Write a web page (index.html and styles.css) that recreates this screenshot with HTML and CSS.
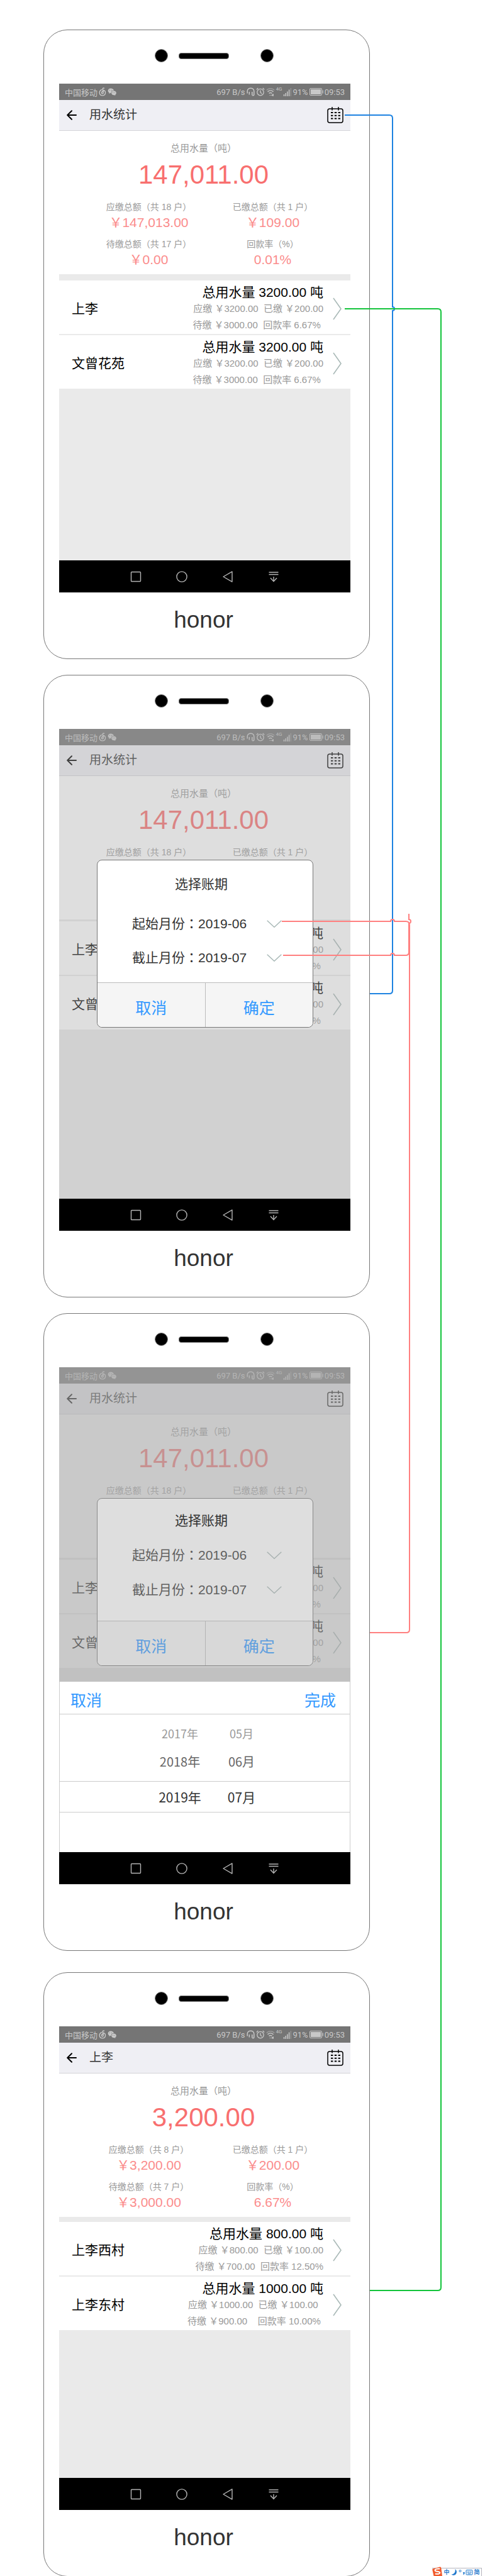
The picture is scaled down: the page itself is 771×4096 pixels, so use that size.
FILE: index.html
```html
<!DOCTYPE html>
<html lang="zh-CN">
<head>
<meta charset="utf-8">
<meta name="viewport" content="width=device-width, initial-scale=1">
<title>用水统计</title>
<link rel="stylesheet" href="styles.css">
</head>
<body>
<svg class="sprite" aria-hidden="true">
  <symbol id="music" viewBox="0 0 12 14"><path d="M8.5 1.2C7 .6 6 1.600 6.200 3L7.200 8.200C7.400 10.500 4.400 10.400 4.500 8.200C4.600 6.800 6 6.200 7.500 6.300M4.300 3.600C-.6 6 .6 12.800 5.800 12.900C11.800 12.800 12.200 5 6.500 4.300" fill="none" stroke="currentColor" stroke-width="1.400" stroke-linecap="round"/></symbol>
  <symbol id="wechat" viewBox="0 0 14 14"><path d="M5 1.500c2.600 0 4.700 1.500 4.900 3.500C7 5 5.200 7 5.600 9.200L4 9.100 2.300 10.200 2.600 8.500C-.9 6.500.6 1.500 5 1.500z" fill="currentColor"/><path d="M9.800 5.600c4.200 0 5.400 4.400 2.300 6.100l.3 1.300-1.500-.8C5 12.800 4.800 5.800 9.800 5.600z" fill="currentColor"/><g fill="#777"><circle cx="3.600" cy="4.300" r=".6"/><circle cx="6.600" cy="4.300" r=".6"/><circle cx="8.600" cy="8.200" r=".5"/><circle cx="11" cy="8.200" r=".5"/></g></symbol>
  <symbol id="headset" viewBox="0 0 13 14"><path d="M1.200 9.500V6C1.500-.4 11.500-.4 11.800 6v5.500c0 1-1.500 1.300-2.500 1.300M4.300 7v4.500M8.800 7v5.500" fill="none" stroke="currentColor" stroke-width="1.500"/></symbol>
  <symbol id="alarm" viewBox="0 0 14 14"><circle cx="7" cy="7.600" r="5.200" fill="none" stroke="currentColor" stroke-width="1.300"/><path d="M7 4.500v3.300l2 2.200M.8 3.500 3.300 1M13.200 3.500 10.700 1" fill="none" stroke="currentColor" stroke-width="1.300"/></symbol>
  <symbol id="wifi" viewBox="0 0 14 14"><path d="M.8 4.500C4 .8 10 .8 13.200 4.500" fill="none" stroke="currentColor" stroke-width="1.400" opacity=".45"/><path d="M2.500 7c2.500-2.800 6.500-2.800 9 0M4.600 9.600c1.400-1.500 3.400-1.500 4.800 0" fill="none" stroke="currentColor" stroke-width="1.400"/><path d="M5.500 12.500h2M8.500 12.500l3-2v3z" fill="currentColor" stroke="currentColor" stroke-width=".8"/></symbol>
  <symbol id="signal" viewBox="0 0 13 14"><path d="M1.500 11v3M4.200 9v5M6.900 6.500V14M9.600 3.500V14" stroke="currentColor" stroke-width="1.500"/><path d="M12.300 1v13" stroke="currentColor" opacity=".5"/></symbol>
  <symbol id="battery" viewBox="0 0 22 12"><rect x=".5" y=".5" width="19" height="11" rx="1.500" fill="none" stroke="currentColor"/><rect x="2" y="2" width="16" height="8" fill="currentColor"/><path d="M21.200 3.500v5" stroke="currentColor" stroke-width="1.200"/></symbol>
  <symbol id="back" viewBox="0 0 16 16"><path d="M15 8H1.500M8 1.200 1.200 8 8 14.800" fill="none" stroke="currentColor" stroke-width="2" stroke-linecap="round" stroke-linejoin="round"/></symbol>
  <symbol id="calendar" viewBox="0 0 26 26"><rect x="1" y="3" width="24" height="22" rx="3" fill="none" stroke="currentColor" stroke-width="1.500"/><path d="M8 .5v4.500M18 .5v4.500" stroke="currentColor" stroke-width="1.500" stroke-linecap="round"/><path d="M6 9h15M6 13.800h15M6 18.600h15" stroke="currentColor" stroke-width="2" stroke-dasharray="3.400 2.400"/></symbol>
  <symbol id="next" viewBox="0 0 14 36"><path d="M1 1 13 18 1 35" fill="none" stroke="#a9b9b7" stroke-width="1.600"/></symbol>
  <symbol id="down" viewBox="0 0 24 12"><path d="M.7.7 12 11.200 23.300.7" fill="none" stroke="#a9b9b7" stroke-width="1.500"/></symbol>
  <symbol id="nav-square" viewBox="0 0 18 18"><rect x="1.500" y="1.500" width="15" height="15" rx="1" fill="none" stroke="#b4b4b4" stroke-width="1.400"/></symbol>
  <symbol id="nav-circle" viewBox="0 0 18 18"><circle cx="9" cy="9" r="8.100" fill="none" stroke="#b4b4b4" stroke-width="1.400"/></symbol>
  <symbol id="nav-back" viewBox="0 0 18 18"><path d="M16 .9v16.200L2 9z" fill="none" stroke="#b4b4b4" stroke-width="1.400" stroke-linejoin="round"/></symbol>
  <symbol id="nav-down" viewBox="0 0 18 18"><path d="M1.500 2h15M1.500 5.500h15M9 9v7.500M4 11l5 5.500L14 11" fill="none" stroke="#b4b4b4" stroke-width="1.400"/></symbol>
</svg>

<main class="board">

  <section class="phone">
    <div class="sensors"><i class="dot"></i><i class="speaker"></i><i class="dot dot-far"></i></div>
    <div class="app">
      <div class="status"><span>中国移动</span><svg class="i-music"><use href="#music"/></svg><svg class="i-14"><use href="#wechat"/></svg><span class="status-right">697 B/s</span><svg class="i-13"><use href="#headset"/></svg><svg class="i-14"><use href="#alarm"/></svg><svg class="i-14"><use href="#wifi"/></svg><small>4G</small><svg class="i-13"><use href="#signal"/></svg><span>91%</span><svg class="i-battery"><use href="#battery"/></svg><span>09:53</span></div>
      <header class="bar"><button class="icon-btn" aria-label="返回"><svg class="i-back"><use href="#back"/></svg></button><h1>用水统计</h1><button class="icon-btn" aria-label="选择账期"><svg class="i-cal"><use href="#calendar"/></svg></button></header>
      <div class="summary">
        <p class="total-label">总用水量（吨）</p>
        <p class="total">147,011.00</p>
        <dl class="stats">
          <div><dt>应缴总额（共 18 户）</dt><dd>￥147,013.00</dd></div>
          <div><dt>已缴总额（共 1 户）</dt><dd>￥109.00</dd></div>
          <div><dt>待缴总额（共 17 户）</dt><dd>￥0.00</dd></div>
          <div><dt>回款率（%）</dt><dd>0.01%</dd></div>
        </dl>
      </div>
      <div class="list list-gap-10">
        <a class="item" href="#"><span class="name">上李</span><span class="info"><span class="usage">总用水量 3200.00 吨</span><span>应缴 ￥3200.00  已缴 ￥200.00</span><span>待缴 ￥3000.00  回款率 6.67% </span></span><svg class="i-next"><use href="#next"/></svg></a>
        <a class="item" href="#"><span class="name">文曾花苑</span><span class="info"><span class="usage">总用水量 3200.00 吨</span><span>应缴 ￥3200.00  已缴 ￥200.00</span><span>待缴 ￥3000.00  回款率 6.67% </span></span><svg class="i-next"><use href="#next"/></svg></a>
      </div>
      <div class="rest rest-first"></div>
    </div>
    <nav class="keys"><svg><use href="#nav-square"/></svg><svg><use href="#nav-circle"/></svg><svg><use href="#nav-back"/></svg><svg><use href="#nav-down"/></svg></nav>
    <p class="brand">honor</p>
  </section>

  <section class="phone">
    <div class="sensors"><i class="dot"></i><i class="speaker"></i><i class="dot dot-far"></i></div>
    <div class="app">
      <div class="status"><span>中国移动</span><svg class="i-music"><use href="#music"/></svg><svg class="i-14"><use href="#wechat"/></svg><span class="status-right">697 B/s</span><svg class="i-13"><use href="#headset"/></svg><svg class="i-14"><use href="#alarm"/></svg><svg class="i-14"><use href="#wifi"/></svg><small>4G</small><svg class="i-13"><use href="#signal"/></svg><span>91%</span><svg class="i-battery"><use href="#battery"/></svg><span>09:53</span></div>
      <header class="bar"><button class="icon-btn" aria-label="返回"><svg class="i-back"><use href="#back"/></svg></button><h1>用水统计</h1><button class="icon-btn" aria-label="选择账期"><svg class="i-cal"><use href="#calendar"/></svg></button></header>
      <div class="summary">
        <p class="total-label">总用水量（吨）</p>
        <p class="total">147,011.00</p>
        <dl class="stats stats-covered">
          <div><dt>应缴总额（共 18 户）</dt></div>
          <div><dt>已缴总额（共 1 户）</dt></div>
        </dl>
      </div>
      <div class="list list-gap-3">
        <a class="item" href="#"><span class="name">上李</span><span class="info"><span class="usage">吨</span><span>00</span><span>% </span></span><svg class="i-next"><use href="#next"/></svg></a>
        <a class="item" href="#"><span class="name">文曾</span><span class="info"><span class="usage">吨</span><span>00</span><span>% </span></span><svg class="i-next"><use href="#next"/></svg></a>
      </div>
      <div class="rest rest-second"></div>
      <div class="dim"></div>
      <div class="dialog" role="dialog">
        <h2>选择账期</h2>
        <div class="fields">
          <button class="field"><span>起始月份<span class="colon" lang="zh-TW">：</span>2019-06</span><svg class="i-down"><use href="#down"/></svg></button>
          <button class="field"><span>截止月份<span class="colon" lang="zh-TW">：</span>2019-07</span><svg class="i-down"><use href="#down"/></svg></button>
        </div>
        <div class="actions"><button>取消</button><button>确定</button></div>
      </div>
    </div>
    <nav class="keys"><svg><use href="#nav-square"/></svg><svg><use href="#nav-circle"/></svg><svg><use href="#nav-back"/></svg><svg><use href="#nav-down"/></svg></nav>
    <p class="brand">honor</p>
  </section>

  <section class="phone">
    <div class="sensors"><i class="dot"></i><i class="speaker"></i><i class="dot dot-far"></i></div>
    <div class="app">
      <div class="status"><span>中国移动</span><svg class="i-music"><use href="#music"/></svg><svg class="i-14"><use href="#wechat"/></svg><span class="status-right">697 B/s</span><svg class="i-13"><use href="#headset"/></svg><svg class="i-14"><use href="#alarm"/></svg><svg class="i-14"><use href="#wifi"/></svg><small>4G</small><svg class="i-13"><use href="#signal"/></svg><span>91%</span><svg class="i-battery"><use href="#battery"/></svg><span>09:53</span></div>
      <header class="bar"><button class="icon-btn" aria-label="返回"><svg class="i-back"><use href="#back"/></svg></button><h1>用水统计</h1><button class="icon-btn" aria-label="选择账期"><svg class="i-cal"><use href="#calendar"/></svg></button></header>
      <div class="summary">
        <p class="total-label">总用水量（吨）</p>
        <p class="total">147,011.00</p>
        <dl class="stats stats-covered">
          <div><dt>应缴总额（共 18 户）</dt></div>
          <div><dt>已缴总额（共 1 户）</dt></div>
        </dl>
      </div>
      <div class="list list-gap-3">
        <a class="item" href="#"><span class="name">上李</span><span class="info"><span class="usage">吨</span><span>00</span><span>% </span></span><svg class="i-next"><use href="#next"/></svg></a>
        <a class="item" href="#"><span class="name">文曾</span><span class="info"><span class="usage">吨</span><span>00</span><span>% </span></span><svg class="i-next"><use href="#next"/></svg></a>
      </div>
      <div class="rest rest-third"></div>
      <div class="dim"></div>
      <div class="dialog dialog-behind" role="dialog">
        <h2>选择账期</h2>
        <div class="fields">
          <button class="field"><span>起始月份<span class="colon" lang="zh-TW">：</span>2019-06</span><svg class="i-down"><use href="#down"/></svg></button>
          <button class="field"><span>截止月份<span class="colon" lang="zh-TW">：</span>2019-07</span><svg class="i-down"><use href="#down"/></svg></button>
        </div>
        <div class="actions"><button>取消</button><button>确定</button></div>
      </div>
      <div class="dim dim-top"></div>
    </div>
    <div class="sheet">
      <div class="sheet-bar"><button>取消</button><button>完成</button></div>
      <div class="pick pick-far"><span>2017年</span><span>05月</span></div>
      <div class="pick pick-near"><span>2018年</span><span>06月</span></div>
      <div class="pick pick-on"><span>2019年</span><span>07月</span></div>
    </div>
    <nav class="keys"><svg><use href="#nav-square"/></svg><svg><use href="#nav-circle"/></svg><svg><use href="#nav-back"/></svg><svg><use href="#nav-down"/></svg></nav>
    <p class="brand">honor</p>
  </section>

  <section class="phone phone-last">
    <div class="sensors"><i class="dot"></i><i class="speaker"></i><i class="dot dot-far"></i></div>
    <div class="app">
      <div class="status"><span>中国移动</span><svg class="i-music"><use href="#music"/></svg><svg class="i-14"><use href="#wechat"/></svg><span class="status-right">697 B/s</span><svg class="i-13"><use href="#headset"/></svg><svg class="i-14"><use href="#alarm"/></svg><svg class="i-14"><use href="#wifi"/></svg><small>4G</small><svg class="i-13"><use href="#signal"/></svg><span>91%</span><svg class="i-battery"><use href="#battery"/></svg><span>09:53</span></div>
      <header class="bar"><button class="icon-btn" aria-label="返回"><svg class="i-back"><use href="#back"/></svg></button><h1>上李</h1><button class="icon-btn" aria-label="选择账期"><svg class="i-cal"><use href="#calendar"/></svg></button></header>
      <div class="summary">
        <p class="total-label">总用水量（吨）</p>
        <p class="total">3,200.00</p>
        <dl class="stats">
          <div><dt>应缴总额（共 8 户）</dt><dd>￥3,200.00</dd></div>
          <div><dt>已缴总额（共 1 户）</dt><dd>￥200.00</dd></div>
          <div><dt>待缴总额（共 7 户）</dt><dd>￥3,000.00</dd></div>
          <div><dt>回款率（%）</dt><dd>6.67%</dd></div>
        </dl>
      </div>
      <div class="list list-gap-8">
        <a class="item" href="#"><span class="name">上李西村</span><span class="info"><span class="usage">总用水量 800.00 吨</span><span>应缴 ￥800.00  已缴 ￥100.00</span><span>待缴 ￥700.00  回款率 12.50%</span></span><svg class="i-next"><use href="#next"/></svg></a>
        <a class="item" href="#"><span class="name">上李东村</span><span class="info"><span class="usage">总用水量 1000.00 吨</span><span>应缴 ￥1000.00  已缴 ￥100.00  </span><span>待缴 ￥900.00    回款率 10.00% </span></span><svg class="i-next"><use href="#next"/></svg></a>
      </div>
      <div class="rest rest-last"></div>
    </div>
    <nav class="keys"><svg><use href="#nav-square"/></svg><svg><use href="#nav-circle"/></svg><svg><use href="#nav-back"/></svg><svg><use href="#nav-down"/></svg></nav>
    <p class="brand">honor</p>
  </section>

  <svg class="links" viewBox="431 0 340 3700" fill="none" stroke-width="2" aria-hidden="true">
    <path stroke="#1e83e1" d="M548 183H619Q624 183 624 188V488A3 3 0 0 1 624 494V1575Q624 1580 619 1580H588"/>
    <path stroke="#13c43b" d="M548 491H696Q701 491 701 496V3637Q701 3642 696 3642H588"/>
    <g stroke="#ff8080"><path d="M448 1465H621A3 3 0 0 1 627 1465H645Q651 1465 651 1471V2591Q651 2596 646 2596H588"/><path d="M450 1519H621A3 3 0 0 1 627 1519H645Q650 1519 650 1514V1468"/><path d="M650 1453V1462A3 3 0 0 1 650 1468"/></g>
  </svg>

  <div class="ime">
    <svg class="ime-logo" viewBox="0 0 16 15"><path d="M1 3.500 12.500.5Q14 .3 14.300 2L16 15H2.500L.3 5Q.1 3.800 1 3.500z" fill="#f15a2b"/><path d="M12.200 3.600C8 3 4.200 4 4.600 6.200C5 8.400 11.800 7.200 12.300 9.500C12.600 11.800 8.500 12.300 4.800 11.500" fill="none" stroke="#fff" stroke-width="2"/></svg>
    <span>中</span>
    <svg viewBox="0 0 12 12"><path d="M7.500 1C12 4 10 11.500 4 10.800L1.500 9.500C6 9.500 8.500 5.500 7.500 1z" fill="#1f78cc"/></svg>
    <svg viewBox="0 0 12 12"><circle cx="3.500" cy="4" r="1.500" fill="none" stroke="#1f78cc"/><path d="M8.200 6h2.600c.2 2-.6 3.400-2.200 4.200l-.4-.8c.6-.4.8-.8.800-1.400h-.8z" fill="#1f78cc"/></svg>
    <svg viewBox="0 0 12 12"><rect x="1" y="2.500" width="10" height="7.500" rx="1" fill="none" stroke="#1f78cc"/><path d="M2.500 4.800h7M2.500 6.500h7" stroke="#1f78cc" stroke-dasharray="1 .5"/><path d="M3.500 8.300h5" stroke="#1f78cc"/></svg>
    <span>简</span>
  </div>
</main>
</body>
</html>
```
FILE: styles.css
```css
* { box-sizing: border-box; }
body, h1, h2, p, dl, dd { margin: 0; font-weight: 400; }
body {
  background: #fff;
  color: #333;
  font-family: "Liberation Sans", "Noto Sans CJK SC", sans-serif;
}
button { margin: 0; padding: 0; border: 0; background: none; font: inherit; color: inherit; cursor: pointer; }
svg { display: block; flex: none; }
.sprite { position: absolute; width: 0; height: 0; }

.board {
  position: relative;
  display: flex;
  flex-direction: column;
  gap: 25px;
  padding: 47px 183px 0 69px;
  overflow: hidden;
}
.links { position: absolute; top: 0; right: 0; width: 340px; height: 3700px; pointer-events: none; }

/* Handset */
.phone { padding: 30px 30px 0 24px; border: 1px solid #777; border-radius: 38px; }
.phone-last { margin: 9px 0 -1px; }
.sensors { display: flex; align-items: center; justify-content: center; padding: 0 122px 34px 152px; }
.dot { flex: none; width: 21px; height: 21px; border: 1px solid #777; border-radius: 50%; background: #000; }
.dot-far { margin-left: 50px; }
.speaker { flex: none; width: 80px; height: 10px; margin-left: 17px; border: 1px solid #777; border-radius: 4px; background: #000; }
.keys { display: flex; align-items: center; justify-content: center; gap: 55px; height: 51px; background: #000; }
.keys svg { width: 18px; height: 18px; }
.brand { height: 105px; padding: 22px 4px 0 0; font-size: 37px; line-height: 44px; text-align: center; }

/* App chrome */
.app { position: relative; }
.status {
  display: flex;
  align-items: center;
  gap: 2px;
  height: 26px;
  padding: 0 9px;
  background: #757575;
  color: #c8c8c8;
  font-family: Roboto, "Noto Sans CJK SC", sans-serif;
  font-size: 13px;
  white-space: nowrap;
}
.status-right { margin-left: auto; }
.status small { align-self: flex-start; padding-top: 4px; font-size: 8px; line-height: 10px; }
.i-music { width: 12px; height: 14px; }
.i-13 { width: 13px; height: 14px; }
.i-14 { width: 14px; height: 14px; }
.i-battery { width: 22px; height: 12px; }
.bar {
  display: flex;
  align-items: center;
  height: 49px;
  padding: 0 11px 0 12px;
  border: solid #d4d4d8;
  border-width: 0 0 1px;
  background: #efeff4;
}
.icon-btn { color: #000; }
.i-back { width: 16px; height: 16px; }
.i-cal { width: 26px; height: 26px; }
.bar h1 { flex: 1; padding-left: 20px; font-size: 19px; line-height: 28px; }

/* Totals */
.summary { padding: 16px 4px 9px 0; text-align: center; color: #999; }
.total-label { font-size: 15px; line-height: 24px; }
.total { margin-top: 2px; color: #f86f6f; font-size: 42px; line-height: 56px; }
.stats { display: grid; grid-template-columns: 1fr 1fr; row-gap: 9px; margin-top: 12px; padding: 0 21px 0 44px; }
.stats-covered { min-height: 109px; }
.stats dt { font-size: 14px; line-height: 22px; }
.stats dd { color: #fb8c8c; font-size: 21px; line-height: 28px; }

/* Community list */
.list { display: flex; flex-direction: column; gap: 2px; border-top: 10px solid #eaeaea; background: #eaeaea; }
.list-gap-3 { border-top-width: 3px; }
.list-gap-8 { border-top-width: 8px; }
.item {
  display: flex;
  align-items: center;
  gap: 15px;
  padding: 6px 14px 1px 20px;
  background: #fff;
  color: #000;
  text-decoration: none;
}
.name { flex: 1; font-size: 21px; line-height: 28px; }
.info { display: flex; flex-direction: column; text-align: right; white-space: pre; color: #999; font-size: 15px; line-height: 26px; }
.usage { color: #000; font-size: 21px; }
.i-next { width: 14px; height: 36px; }
.rest { background: #eaeaea; }
.rest-first { height: 273px; }
.rest-second { height: 269px; }
.rest-third { height: 22px; }
.rest-last { height: 235px; }

/* Period dialog */
.dim { position: absolute; inset: 0; background: rgba(167, 167, 167, .38); }
.dim-top { z-index: 1; }
.dialog {
  position: absolute;
  top: 208px;
  left: 60px;
  right: 59px;
  padding-top: 24px;
  border: 1px solid #777;
  border-radius: 8px;
  background: #fff;
  font-size: 21px;
  line-height: 28px;
}
.dialog h2 { padding-right: 12px; font-size: 21px; text-align: center; }
.fields { display: flex; flex-direction: column; gap: 26px; padding: 35px 49px 25px 55px; }
.field { display: flex; align-items: center; justify-content: space-between; white-space: nowrap; }
.colon { font-family: "Noto Sans CJK TC", sans-serif; line-height: 1; }
.i-down { width: 24px; height: 12px; }
.actions { display: flex; height: 71px; border-top: 1px solid #bbb; border-radius: 0 0 8px 8px; background: #f5f5f5; }
.actions button { flex: 1; padding-top: 9px; color: #39f; font-size: 25px; }
.actions button + button { border-left: 1px solid #bbb; }
.dialog-behind { padding-top: 21px; }
.dialog-behind h2 { position: relative; z-index: 2; }
.dialog-behind .fields { gap: 27px; padding-top: 27px; padding-bottom: 35px; }

/* Month picker sheet */
.sheet { padding-bottom: 63px; border: solid #ccc; border-width: 0 1px; background: #fff; }
.sheet-bar { display: flex; justify-content: space-between; height: 52px; padding: 4px 22px 0 17px; border-bottom: 1px solid #ccc; color: #39f; font-size: 25px; }
.pick { display: flex; justify-content: center; padding-left: 19px; text-align: center; font-family: "Noto Sans CJK SC", sans-serif; }
.pick span { width: 98px; }
.pick-far { color: #999; font-size: 18px; line-height: 60px; }
.pick-near { padding-bottom: 16px; border-bottom: 1px solid #ccc; color: #666; font-size: 20px; line-height: 30px; }
.pick-on { border-bottom: 1px solid #ccc; color: #333; font-size: 21px; line-height: 48px; }

/* Input method bar */
.ime {
  position: absolute;
  right: 5px;
  bottom: 0;
  display: flex;
  align-items: center;
  height: 13px;
  padding: 0 1px 0 17px;
  border: solid #b5b5bd;
  border-width: 1px 1px 0 0;
  background: #fff;
  color: #1f78cc;
  font: 700 9px/12px "Noto Sans CJK SC", sans-serif;
}
.ime span { width: 12px; text-align: center; }
.ime svg { width: 12px; height: 12px; }
.ime .ime-logo { position: absolute; left: 0; bottom: 0; width: 16px; height: 15px; }
```
